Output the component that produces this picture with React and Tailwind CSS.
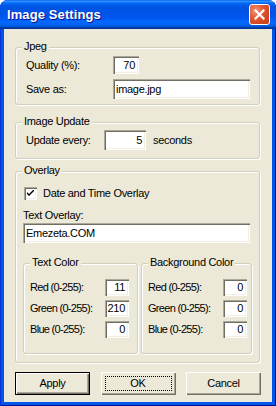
import React from 'react';

const sunken =
  'bg-white shadow-[inset_1px_1px_#aca899,inset_2px_2px_#716f64,inset_-1px_-1px_#fff,inset_-2px_-2px_#f1efe2]';

const Group = ({ label, className, children }) => (
  <div
    className={`relative rounded-[3px] border border-[#d0d0bf] shadow-[inset_1px_1px_#fff,1px_1px_#fff] ${className}`}
  >
    <span className="absolute left-[6px] top-[-8px] bg-[#ece9d8] px-[2px] leading-[13px] text-black">
      {label}
    </span>
    {children}
  </div>
);

const Field = ({ value, className = '', align = 'right' }) => (
  <div
    className={`${sunken} flex shrink-0 items-center px-[4px] leading-[13px] ${
      align === 'right' ? 'justify-end' : 'justify-start'
    } ${className}`}
  >
    {value}
  </div>
);

const ColorRows = ({ rows }) => (
  <div className="flex flex-col gap-[4px]">
    {rows.map(([name, value]) => (
      <div key={name} className="flex items-center">
        <span className="w-[75px] shrink-0 whitespace-nowrap tracking-[-0.7px]">{name} (0-255):</span>
        <Field value={value} className="h-[17px] w-[24px]" />
      </div>
    ))}
  </div>
);

const raised = 'shadow-[inset_1px_1px_#fff,inset_-1px_-1px_#716f64,inset_-2px_-2px_#aca899]';

const Button = ({ children, variant }) => {
  if (variant === 'default') {
    return (
      <div className="h-[23px] w-[75px] border border-black">
        <div className={`flex h-full w-full items-center justify-center bg-[#ece9d8] ${raised}`}>{children}</div>
      </div>
    );
  }
  return (
    <div className={`flex h-[23px] w-[75px] items-center justify-center bg-[#ece9d8] p-[4px] ${raised}`}>
      <div
        className={`flex h-full w-full items-center justify-center ${
          variant === 'focus' ? 'border border-dotted border-black' : ''
        }`}
      >
        {children}
      </div>
    </div>
  );
};

export default function App() {
  return (
    <div className="h-[406px] w-[276px] bg-white">
      <div
        className="flex h-full w-full flex-col rounded-t-[8px] bg-[#0055ea] shadow-[inset_1px_0_#0831d9,inset_-1px_-1px_#00138c]"
        style={{ fontFamily: '"Liberation Sans", Arial, sans-serif', fontSize: '11px' }}
      >
        {/* title bar */}
        <div className="flex h-[29px] shrink-0 items-center justify-between rounded-t-[8px] bg-[linear-gradient(to_bottom,#0058ee_0%,#3593ff_4%,#288eff_6%,#127dff_8%,#036ffc_10%,#0262ee_14%,#0057e5_20%,#0054e3_24%,#0055eb_56%,#005bf5_66%,#026afe_76%,#0062ef_86%,#0052d6_92%,#0040ab_94%,#003092_100%)] pl-[7px] pr-[6px]">
          <span className="text-[13px] font-bold tracking-[0.1px] text-white [text-shadow:1px_1px_#0f1089]">
            Image Settings
          </span>
          <div className="flex h-[21px] w-[21px] items-center justify-center rounded-[3px] border border-white bg-[radial-gradient(circle_at_30%_30%,#f0947a_0%,#e0542e_45%,#c23a13_100%)]">
            <svg width="11" height="11" viewBox="0 0 11 11">
              <path d="M1.5 1.5 L9.5 9.5 M9.5 1.5 L1.5 9.5" stroke="#fff" strokeWidth="2.2" strokeLinecap="square" />
            </svg>
          </div>
        </div>

        {/* client area */}
        <div className="mx-[4px] mb-[4px] flex flex-1 flex-col bg-[#ece9d8] pl-[11px] pt-[18px] tracking-[-0.3px] text-black">
          <Group label="Jpeg" className="h-[58px] w-[245px]">
            <div className="grid grid-cols-[87px_auto] items-center gap-y-[5px] pl-[10px] pt-[8px]">
              <span>Quality (%):</span>
              <Field value="70" className="h-[18px] w-[26px]" />
              <span>Save as:</span>
              <Field value="image.jpg" align="left" className="h-[20px] w-[137px] !px-[3px]" />
            </div>
          </Group>

          <Group label="Image Update" className="mt-[17px] h-[37px] w-[245px]">
            <div className="flex items-center pl-[10px] pt-[7px]">
              <span className="w-[78px] shrink-0">Update every:</span>
              <Field value="5" className="h-[20px] w-[42px]" />
              <span className="ml-[7px]">seconds</span>
            </div>
          </Group>

          <Group label="Overlay" className="mt-[12px] h-[192px] w-[245px]">
            <div className="flex flex-col pl-[7px] pt-[15px]">
              <div className="flex items-center pl-[1px]">
                <div className={`${sunken} flex h-[13px] w-[13px] items-center justify-center`}>
                  <svg width="7" height="7" viewBox="0 0 7 7">
                    <path d="M0 2 L0 4 L2 6 L7 1 L7 -1 L2 4 Z" fill="#000" />
                  </svg>
                </div>
                <span className="ml-[6px] leading-[13px]">Date and Time Overlay</span>
              </div>
              <span className="mt-[9px] leading-[13px]">Text Overlay:</span>
              <Field value="Emezeta.COM" align="left" className="mt-[1px] h-[20px] w-[227px] !px-[3px]" />

              <div className="mt-[20px] flex gap-[3px]">
                <Group label="Text Color" className="h-[91px] w-[115px]">
                  <div className="pl-[6px] pt-[15px]">
                    <ColorRows rows={[['Red', '11'], ['Green', '210'], ['Blue', '0']]} />
                  </div>
                </Group>
                <Group label="Background Color" className="h-[91px] w-[111px]">
                  <div className="pl-[6px] pt-[15px]">
                    <ColorRows rows={[['Red', '0'], ['Green', '0'], ['Blue', '0']]} />
                  </div>
                </Group>
              </div>
            </div>
          </Group>

          <div className="mt-[9px] flex w-[246px] justify-between">
            <Button variant="default">Apply</Button>
            <Button variant="focus">OK</Button>
            <Button>Cancel</Button>
          </div>
        </div>
      </div>
    </div>
  );
}
